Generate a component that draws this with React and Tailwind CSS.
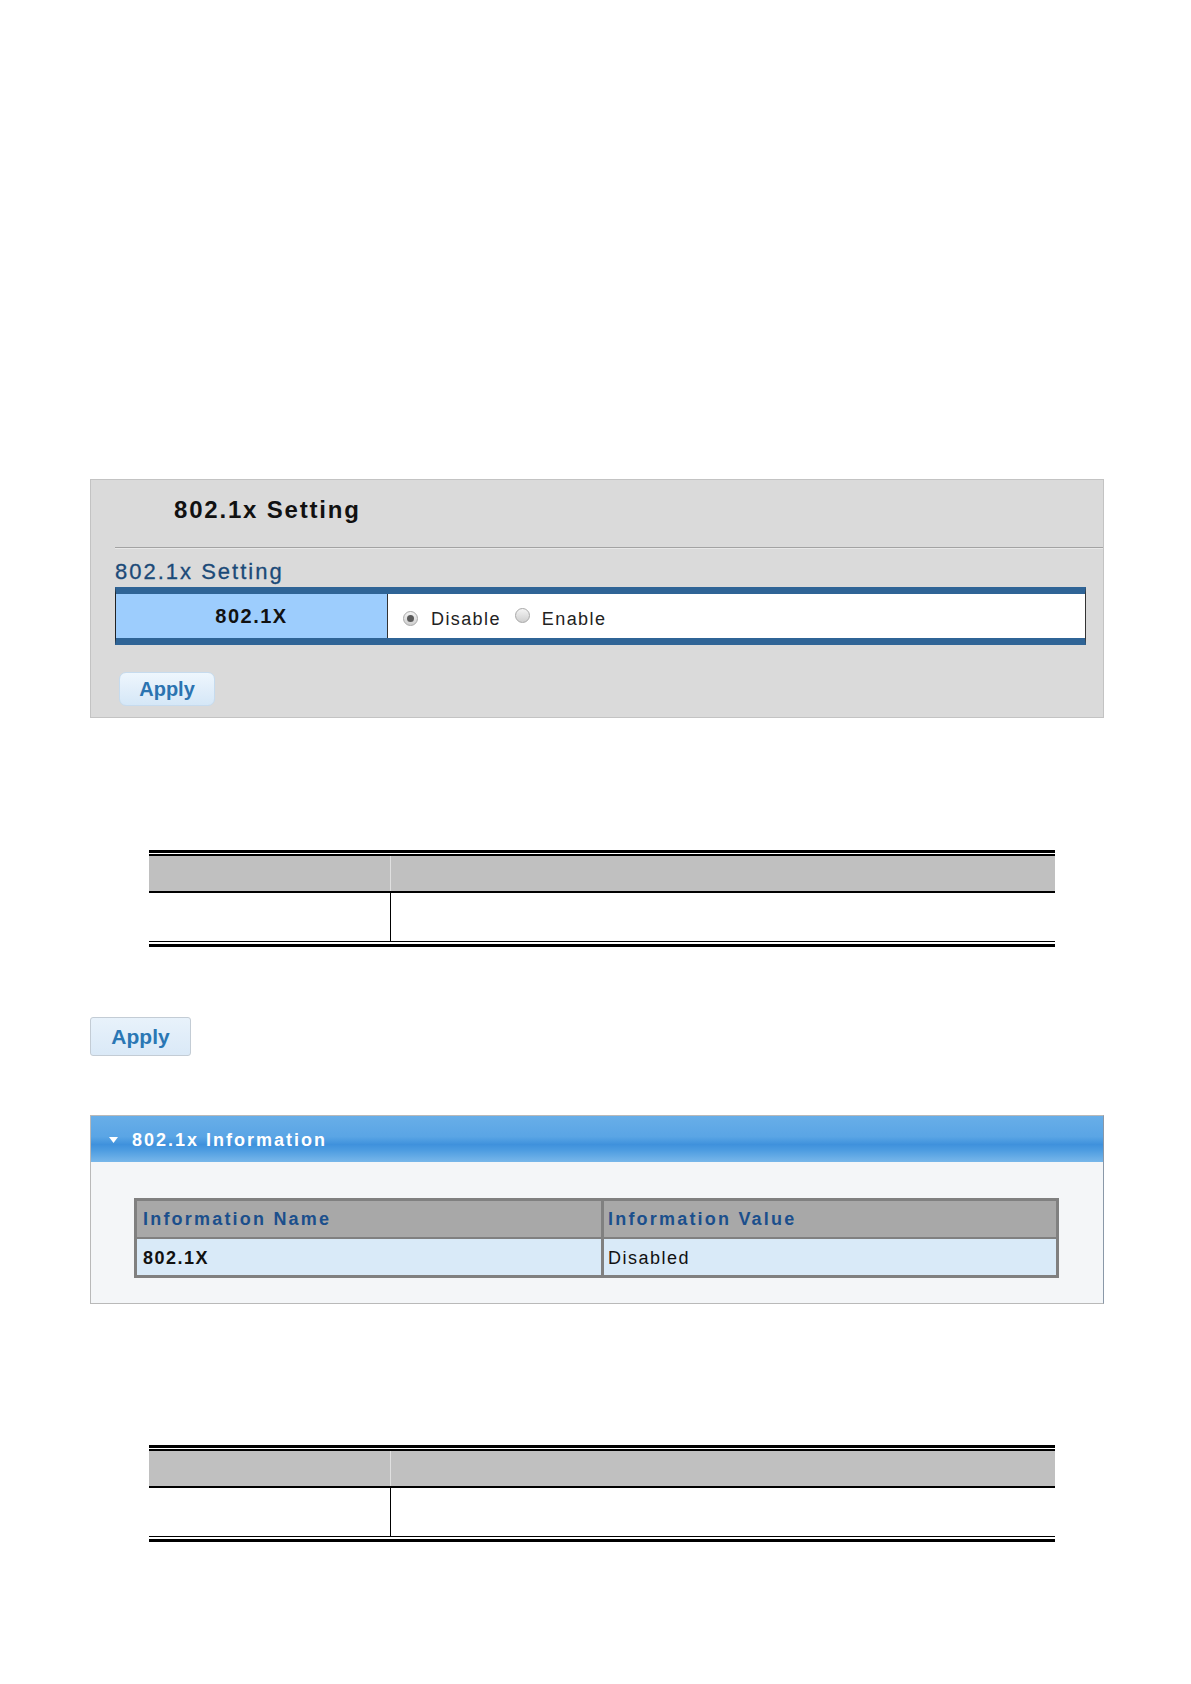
import React from 'react';

const Radio = ({ checked }) => (
  <span className="inline-flex items-center justify-center w-[15px] h-[15px] rounded-full border border-[#a8a8a8] bg-gradient-to-b from-[#f4f4f4] to-[#cfcfcf]">
    {checked && <span className="w-[7px] h-[7px] rounded-full bg-[#5a5a5a]" />}
  </span>
);

// empty black-ruled table used twice in the document
const RuledTable = () => (
  <div className="ml-[149px] w-[906px]">
    <div className="h-[3px] bg-black" />
    <div className="h-[1px] bg-white" />
    <div className="h-[2px] bg-black" />
    <div className="flex h-[37px] bg-[#c0c0c0] border-b-2 border-black">
      <div className="w-[242px] border-r border-[#e0e0e0]" />
      <div className="flex-1" />
    </div>
    <div className="flex h-[48px] bg-white">
      <div className="w-[242px] border-r border-black" />
      <div className="flex-1" />
    </div>
    <div className="h-[1px] bg-black" />
    <div className="h-[2px] bg-white" />
    <div className="h-[3px] bg-black" />
  </div>
);

const App = () => {
  return (
    <div className="w-[1191px] h-[1684px] bg-white overflow-hidden font-['Liberation_Sans',Arial,sans-serif]">
      {/* 802.1x Setting panel */}
      <div className="mt-[479px] ml-[90px] w-[1014px] h-[239px] border border-[#c3c3c3] bg-[#dadada]">
        <div className="h-[67px] pl-[83px] pt-[16px]">
          <h1 className="text-[24px] leading-[28px] font-bold tracking-[1.8px] text-[#111]">802.1x Setting</h1>
        </div>
        <div className="ml-[24px] border-t border-[#a3a3a3]" />
        <div className="ml-[24px] h-[1px] bg-[#e8e8e8]" />
        <h2 className="ml-[24px] mt-[10px] text-[22px] leading-[26px] tracking-[2px] text-[#1b4a78] [-webkit-text-stroke:0.3px_#1b4a78]">802.1x Setting</h2>
        <div className="ml-[24px] mt-[2px] w-[971px] flex border-t-[7px] border-b-[7px] border-t-[#2f6496] border-b-[#2f6496] border-l border-r border-l-[#222] border-r-[#333]">
          <div className="w-[272px] h-[44px] bg-[#9dcdfd] border-r border-[#333] flex items-center justify-center">
            <span className="text-[20px] font-bold tracking-[1.5px] text-[#111]">802.1X</span>
          </div>
          <div className="flex-1 h-[44px] bg-white flex items-center pl-[15px] pt-[4px]">
            <Radio checked />
            <span className="ml-[13px] pt-[3px] text-[18px] tracking-[1.4px] text-[#222]">Disable</span>
            <span className="ml-[14px]"><Radio /></span>
            <span className="ml-[12px] pt-[3px] text-[18px] tracking-[1.4px] text-[#222]">Enable</span>
          </div>
        </div>
        <button className="mt-[27px] ml-[28px] w-[96px] h-[34px] rounded-[7px] border border-[#c6dbee] bg-gradient-to-b from-[#eef6fd] to-[#d5e7f7] text-[20px] font-bold text-[#2b73b0]">
          Apply
        </button>
      </div>

      <div className="mt-[132px]">
        <RuledTable />
      </div>

      <button className="mt-[70px] ml-[90px] w-[101px] h-[39px] rounded-[3px] border border-[#c3ccd5] bg-gradient-to-b from-[#e8f2fb] to-[#dae9f7] text-[21px] font-bold text-[#2a77b4]">
        Apply
      </button>

      {/* 802.1x Information panel */}
      <div className="mt-[59px] ml-[90px] w-[1014px] h-[189px] border border-[#b9b9b9] border-r-[#8a98a8] bg-[#f4f6f8]">
        <div className="h-[46px] flex items-center bg-[linear-gradient(to_bottom,#68aee8_0%,#5aa5e5_45%,#3f91dc_62%,#4e9de1_75%,#78b7ea_100%)]">
          <svg className="ml-[18px] mt-[2px]" width="9" height="6" viewBox="0 0 9 6">
            <path d="M0 0 L9 0 L4.5 6 Z" fill="#fff" />
          </svg>
          <span className="ml-[14px] pt-[3px] text-[18px] font-bold tracking-[2px] text-white">802.1x Information</span>
        </div>
        <div className="pt-[36px] pl-[43px]">
          <div className="w-[925px] border-[3px] border-[#808080]">
            <div className="flex h-[38px] bg-[#a8a8a8] border-b-2 border-[#808080]">
              <div className="w-[467px] border-r-[3px] border-[#808080] flex items-center pl-[6px]">
                <span className="text-[18px] font-bold tracking-[2.2px] text-[#1b4f8c]">Information Name</span>
              </div>
              <div className="flex-1 flex items-center pl-[4px]">
                <span className="text-[18px] font-bold tracking-[2.2px] text-[#1b4f8c]">Information Value</span>
              </div>
            </div>
            <div className="flex h-[36px] bg-[#d9eaf8]">
              <div className="w-[467px] border-r-[3px] border-[#808080] flex items-center pl-[6px] pt-[2px]">
                <span className="text-[18px] font-bold tracking-[1.5px] text-[#111]">802.1X</span>
              </div>
              <div className="flex-1 flex items-center pl-[4px] pt-[2px]">
                <span className="text-[18px] tracking-[1.5px] text-[#111]">Disabled</span>
              </div>
            </div>
          </div>
        </div>
      </div>

      <div className="mt-[141px]">
        <RuledTable />
      </div>
    </div>
  );
};

export default App;
